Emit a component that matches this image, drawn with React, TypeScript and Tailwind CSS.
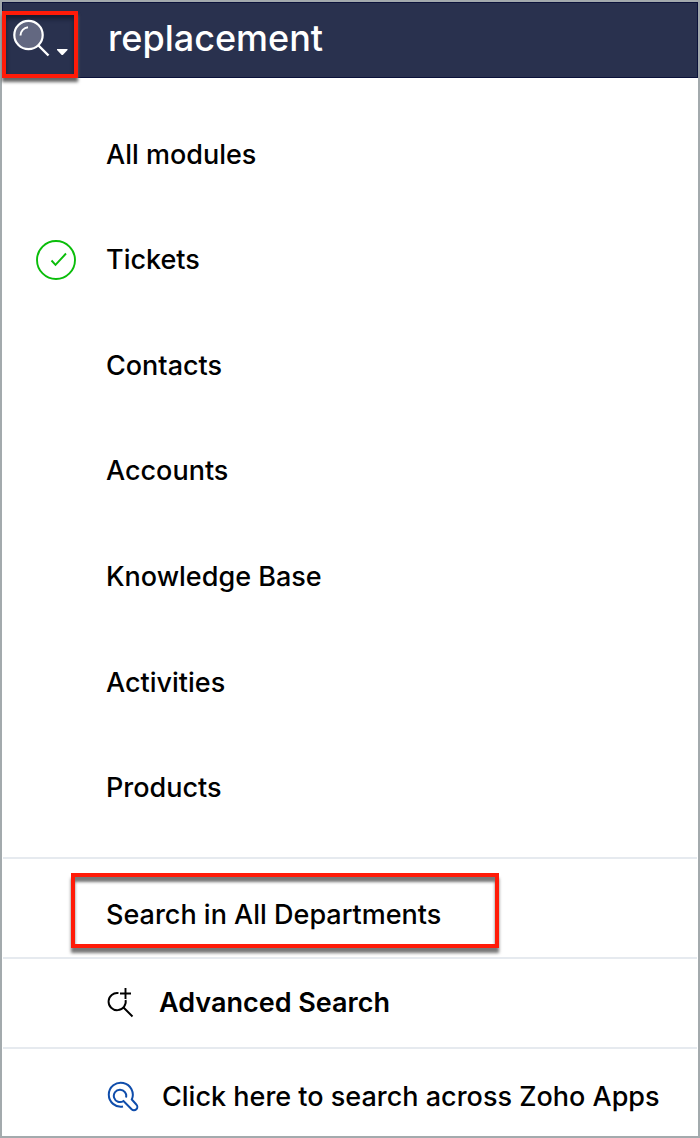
import { useState } from "react";

const modules = ["All modules", "Tickets", "Contacts", "Accounts", "Knowledge Base", "Activities", "Products"];

function SearchIcon() {
  return (
    <svg className="h-[46px] w-[60px]" viewBox="0 0 60 46" fill="none" aria-hidden="true">
      <circle cx="18.5" cy="20" r="14.2" fill="#636881" stroke="#fff" strokeWidth="2.2" />
      <path d="M10.500 20.500c.3-4.200 3.300-7.700 7.500-8.200" stroke="#fff" strokeWidth="2" />
      <path d="M28.500 30.500 38.500 40.500" stroke="#fff" strokeWidth="2.400" />
      <path d="M47 34h10.500v1L52.800 40h-1.100L47 35z" fill="#fff" />
    </svg>
  );
}

function CheckIcon() {
  return (
    <svg className="h-10 w-10" viewBox="0 0 40 40" fill="none" stroke="#0abd0a" aria-hidden="true">
      <circle cx="20" cy="20" r="19" strokeWidth="1.900" />
      <path d="m15.500 20.500 4 4.300L30 13.500" strokeWidth="1.900" />
    </svg>
  );
}

function AdvancedIcon() {
  return (
    <svg className="h-8 w-8" viewBox="0 0 32 32" fill="none" stroke="#000" strokeWidth="1.900" aria-hidden="true">
      <path d="M11.500 6.100A8.600 8.600 0 1 0 18.600 13" />
      <path d="M16.500 20.500 25.500 29.500M18.500 1v11M13 6.500h11" />
    </svg>
  );
}

function AppsIcon() {
  return (
    <svg className="h-8 w-8" viewBox="0 0 32 32" fill="none" stroke="#0f4dab" strokeWidth="2" aria-hidden="true">
      <path d="M16 25.500a12 12 0 1 1 8.800-7L29.300 23.500a3.300 3.300 0 0 1-4.700 4.800L16.500 20A6.200 6.200 0 1 1 19 16.500" />
    </svg>
  );
}

export default function App() {
  const [query, setQuery] = useState("replacement");
  const [selected, setSelected] = useState("Tickets");

  return (
    <main className="border-2 border-[#a3aaad] bg-white font-['Inter',sans-serif] text-[27px] leading-9 font-medium text-black">
      <header className="flex h-[76px] items-center bg-[#29314e] shadow-[inset_0_0_0_1px_#0b123a]">
        <button
          type="button"
          aria-label="Choose where to search"
          className="mt-2 flex h-[67px] w-[76px] shrink-0 items-start border-4 border-[#ff1b08] pl-1 shadow-[0_4px_3px_#666,inset_0_4px_4px_#151c31]"
        >
          <SearchIcon />
        </button>
        <input
          aria-label="Search"
          value={query}
          onChange={(e) => setQuery(e.target.value)}
          className="ml-[30px] min-w-0 flex-1 bg-transparent pr-4 pb-1 text-[36px] leading-[48px] font-medium text-white outline-none"
        />
      </header>

      <ul className="grid min-h-[779px] auto-rows-fr pt-6 pb-4">
        {modules.map((name) => (
          <li key={name} className="flex">
            <button type="button" aria-pressed={selected === name} onClick={() => setSelected(name)} className="flex w-full items-center pl-[34px] text-left">
              <span className="mr-[30px] h-10 w-10 shrink-0">{selected === name && <CheckIcon />}</span>
              {name}
            </button>
          </li>
        ))}
      </ul>

      <div className="px-px">
        <div className="border-t-2 border-[#e6eaef] pt-[14px] pb-[9px] pl-[68px]">
          <button
            type="button"
            className="flex h-[75px] w-[428px] max-w-full items-center border-4 border-[#ff1b08] pt-2 pl-[31px] text-left shadow-[0_5px_3px_#777,inset_0_5px_3px_#777]"
          >
            Search in All Departments
          </button>
        </div>
        <a href="#advanced" className="flex h-[90px] items-center gap-5 border-t-2 border-[#e6eaef] pl-[104px] font-semibold">
          <AdvancedIcon />
          Advanced Search
        </a>
        <a href="#apps" className="flex h-[89px] items-center gap-[23px] border-t-2 border-[#e6eaef] pt-2 pl-[104px]">
          <AppsIcon />
          Click here to search across Zoho Apps
        </a>
      </div>
    </main>
  );
}
